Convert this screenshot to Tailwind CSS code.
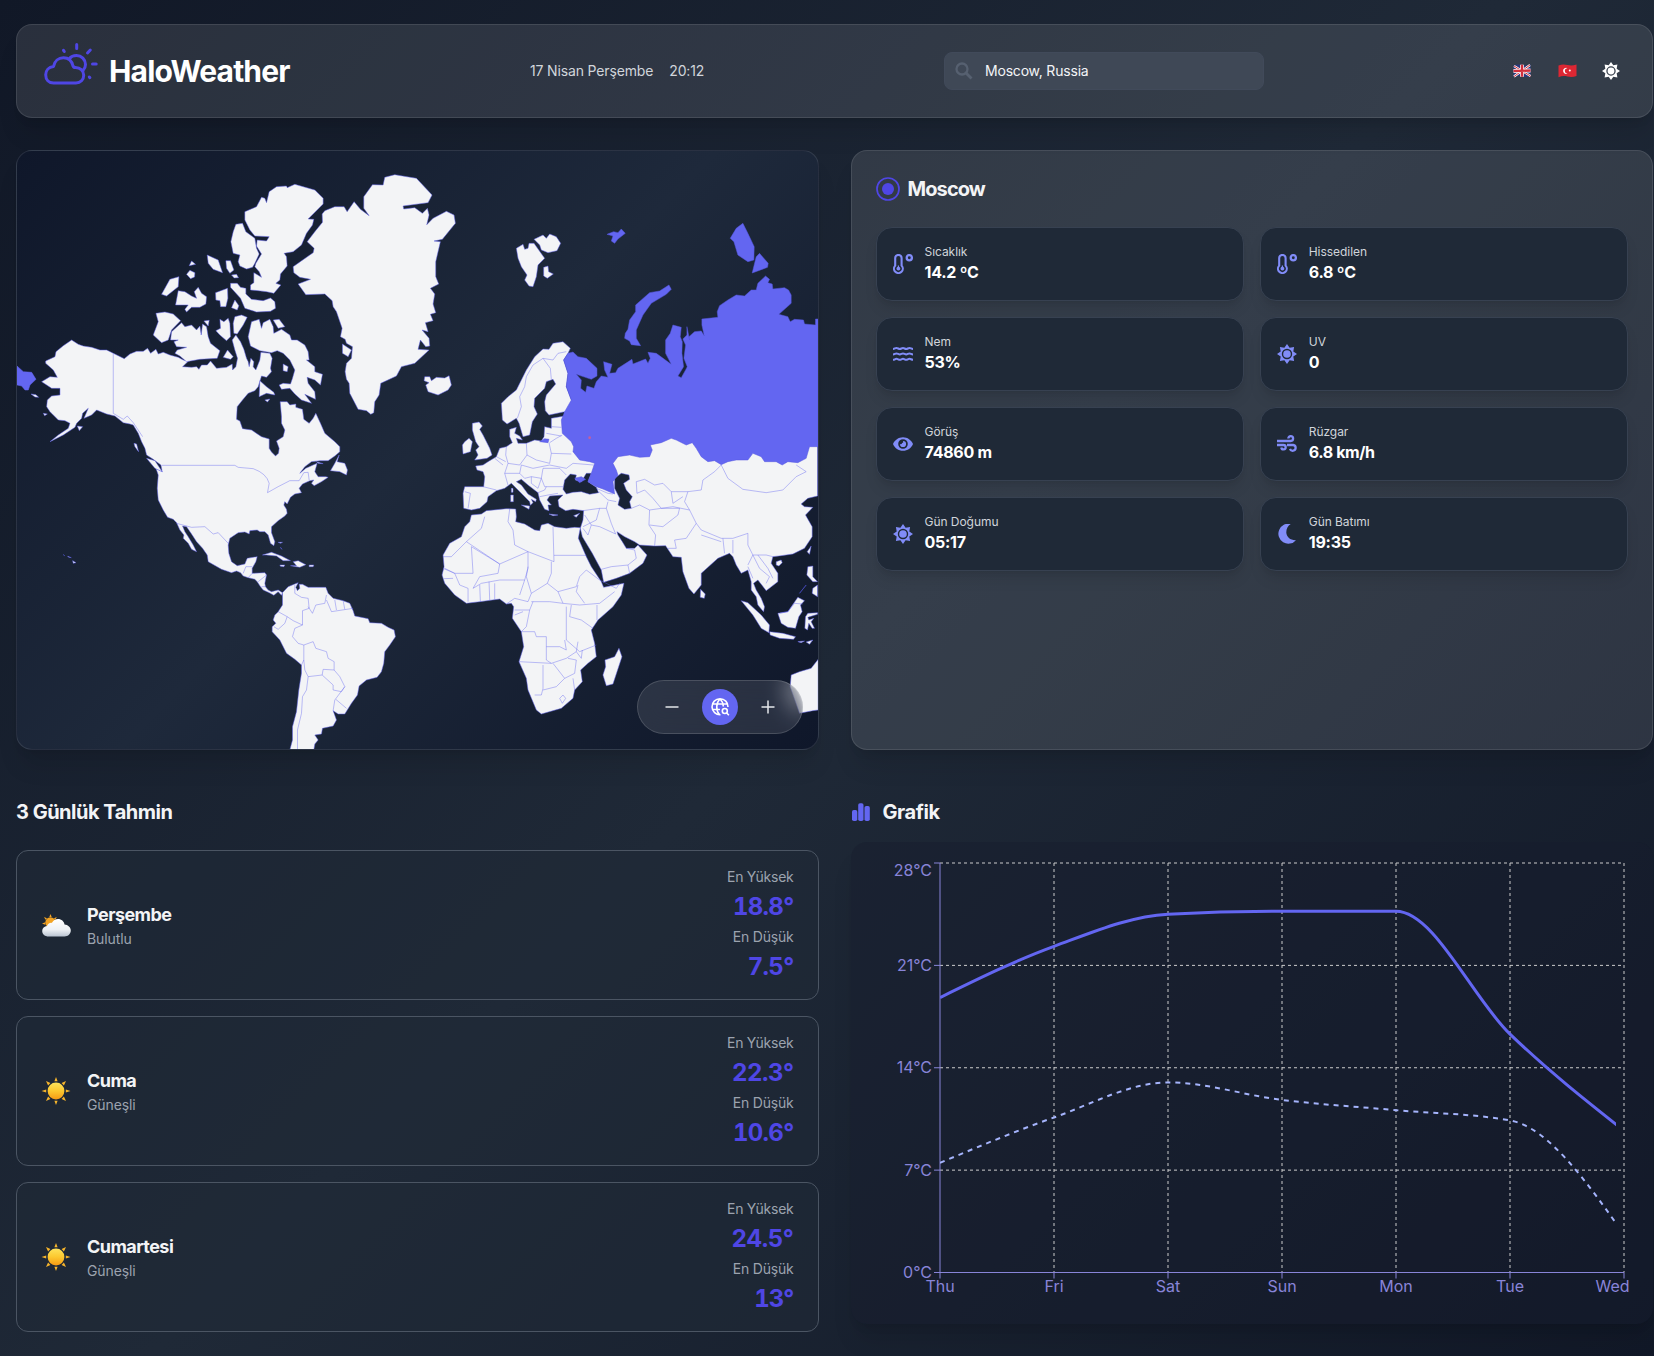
<!DOCTYPE html>
<html lang="tr">
<head>
<meta charset="utf-8">
<title>HaloWeather</title>
<script src="https://cdn.jsdelivr.net/npm/@tailwindcss/browser@4"></script>
</head>
<body class="w-[1654px] h-[1356px] overflow-hidden bg-[linear-gradient(135deg,#111827_0%,#1f2937_50%,#111827_100%)] font-['Inter',sans-serif] text-white">
<svg class="absolute w-0 h-0">
  <symbol id="sun" viewBox="-10 -10 20 20"><path fill-rule="evenodd" fill="currentColor" d="M10 0 6.3 2.6 7.1 7.1 2.6 6.3 0 10-2.6 6.3-7.1 7.1-6.3 2.6-10 0-6.3-2.6-7.1-7.1-2.6-6.3 0-10 2.6-6.3 7.1-7.1 6.3-2.6ZM5.2 0A5.2 5.2 0 1 0-5.2 0 5.2 5.2 0 1 0 5.2 0Z"/><circle r="3.8" fill="currentColor"/></symbol>
  <symbol id="thermo" viewBox="0 0 20 20"><path d="M2.200 11.600V4.100a3.200 3.200 0 0 1 6.400 0V11.600a4.400 4.400 0 1 1-6.400 0Z" fill="none" stroke="currentColor" stroke-width="2.100"/><path d="M4.800 11.500h1.200v1.300a1.900 1.900 0 1 1-1.200 0Z" fill="currentColor"/><circle cx="16.300" cy="3.700" r="2.600" fill="none" stroke="currentColor" stroke-width="2.300"/></symbol>
  <symbol id="waves" viewBox="0 0 20 20"><g fill="none" stroke="currentColor" stroke-width="2"><path d="M0 5c1.800 0 2-1 3.400-1S5.500 5 6.800 5s1.900-1 3.200-1 1.900 1 3.200 1 1.900-1 3.300-1S18.200 5 20 5"/><path d="M0 10.400c1.800 0 2-1 3.400-1s2.100 1 3.400 1 1.900-1 3.200-1 1.900 1 3.200 1 1.900-1 3.300-1 1.700 1 3.500 1"/><path d="M0 15.800c1.800 0 2-1 3.400-1s2.100 1 3.400 1 1.900-1 3.200-1 1.900 1 3.200 1 1.900-1 3.300-1 1.700 1 3.500 1"/></g></symbol>
  <symbol id="eye" viewBox="0 0 20 20"><path fill-rule="evenodd" fill="currentColor" d="M10 3.200C5.500 3.200 1.700 6 0 10c1.700 4 5.500 6.800 10 6.800S18.300 14 20 10C18.300 6 14.500 3.200 10 3.200Zm0 11.600a4.800 4.800 0 1 1 0-9.600 4.800 4.800 0 0 1 0 9.600Z"/><path fill="currentColor" d="M10 6.900a3.100 3.100 0 1 1-3.100 3.100 1.500 1.500 0 0 0 2.200-.9A1.500 1.500 0 0 0 10 6.900Z"/></symbol>
  <symbol id="wind" viewBox="0 0 20 20"><g fill="none" stroke="currentColor" stroke-width="2.300"><path d="M0 7h13.700a2.400 2.400 0 1 0-2.400-2.400"/><path d="M0 11h6.500a2.200 2.200 0 1 1-2.200 2.500"/><path d="M10 11h6.200a2.900 2.900 0 1 1-3.200 3.800"/></g></symbol>
  <symbol id="moon" viewBox="0 0 20 20"><path fill="currentColor" d="M13.700 0A10 10 0 1 0 19 16.200C13.500 16.500 9.500 13 9.300 8.500 9.200 5 10.800 2 13.700 0Z"/></symbol>
  <symbol id="emoji-sun" viewBox="0 0 30 30"><g fill="#f7b52c"><path d="M15 1l1.600 4.200h-3.200zM15 29l1.600-4.200h-3.200zM.5 15l4.700-1.600v3.200zM29.500 15l-4.700-1.600v3.200zM5 5l4.400 2.100-2.300 2.300zM25 5l-4.400 2.100 2.300 2.300zM5 25l4.400-2.100-2.300-2.300zM25 25l-4.400-2.100 2.300-2.300z"/></g><circle cx="15" cy="15" r="8.400" fill="url(#sung)"/></symbol>
  <defs>
    <linearGradient id="sung" x1="0" y1="0" x2="0" y2="1"><stop offset="0" stop-color="#fde25a"/><stop offset=".5" stop-color="#fcc82f"/><stop offset="1" stop-color="#f59a14"/></linearGradient>
    <linearGradient id="cloudg" x1="0" y1="0" x2="0" y2="1"><stop offset="0" stop-color="#fff"/><stop offset=".6" stop-color="#eef1f5"/><stop offset="1" stop-color="#b9c3d1"/></linearGradient>
  </defs>
</svg>

<div class="w-[1653px] pl-4 pt-6">
  <header class="h-[94px] flex items-center rounded-2xl border border-white/10 bg-white/10 shadow-xl px-6 relative">
    <svg class="w-[58px] h-[48px] shrink-0 -mt-3.5" viewBox="41 40 58 48" fill="none" stroke="#4f46e5" stroke-width="3" stroke-linecap="round" stroke-linejoin="round"><path d="M53.500 83c-4.800 0-7.800-3.500-7.800-8.200 0-4.500 3-7.800 7.800-8.300C54.500 61 58.500 57.800 63.500 57.800S71.800 61 73 66c.3 1 1 1.500 2.500 1.500 4.700 0 8.200 3.200 8.200 7.700S80.500 83 76 83Z"/><path d="M69.500 58.500C71 56.500 73.500 55.500 76.500 55.500c5 0 9 4 9 9 0 2.500-1 4.500-2.500 6M76.700 44.500v4M63.500 50.300l.8 1.200M90.300 50l-2.800 3M92.500 64h3.700M89.300 77l.6.700"/></svg>
    <h1 class="ml-2.5 w-[182px] text-3xl font-bold tracking-[-0.85px]">HaloWeather</h1>
    <div class="ml-[239px] w-[414px] flex gap-4 text-sm text-[#d1d5db] tracking-[-0.15px]"><span>17 Nisan Perşembe</span><span>20:12</span></div>
    <div class="w-80 h-[38px] rounded-lg bg-[#3f4856] border border-[#414a5a] flex items-center pl-2.5 text-sm text-[#f3f4f6] shrink-0 tracking-[-0.2px]">
      <svg class="w-[18px] h-[18px] mr-3" viewBox="0 0 18 18" fill="none" stroke="#566070" stroke-width="2.300"><circle cx="7" cy="7" r="5.500"/><path d="M11 11l5.500 5.500" stroke-width="2.800"/></svg>
      <span>Moscow, Russia</span>
    </div>
    <div class="absolute right-[32px] flex items-center">
      <svg class="w-[18px] h-[14px]" viewBox="0 0 18 14"><path fill="#29387e" d="M.5 1.500C4 0 7 .3 9.500 1c3 .8 5.500.5 8-.5V12c-3 1.300-5.500 1.300-8 .6-3-.8-6-.6-9 .6Z"/><path stroke="#fff" stroke-width="2.200" d="M1 2l16.500 10M17 1L1 12.500"/><path stroke="#d22f3c" stroke-width="1" d="M1 2l16.500 10M17 1L1 12.500"/><path stroke="#fff" stroke-width="3.800" d="M9 .8v12M.5 7l17-.5"/><path stroke="#d22f3c" stroke-width="2.400" d="M9 .8v12M.5 7l17-.5"/></svg>
      <svg class="w-[19px] h-[14px] ml-[27px]" viewBox="0 0 19 14"><path fill="#dd2733" d="M.5 1.500C4 0 7 .3 9.500 1c3 .8 6 .5 9-.5V12c-3 1.300-6 1.300-9 .6-3-.8-6-.6-9 .6Z"/><path fill="#fff" d="M9.500 4.200a3 3 0 1 0 0 5.300 2.300 2.300 0 1 1 0-5.300Z"/><circle cx="11.800" cy="6.500" r="1" fill="#fff"/></svg>
      <svg class="w-[18px] h-[18px] ml-[25px]"><use href="#sun"/></svg>
    </div>
  </header>

  <main class="mt-8 grid grid-cols-2 gap-x-8">
    <section class="relative h-[600px] rounded-2xl border border-white/10 shadow-xl overflow-hidden bg-[linear-gradient(135deg,#0f172a_0%,#1e293b_50%,#0f172a_100%)]">
      <svg class="w-full h-full block" viewBox="51 33 2403 1794" preserveAspectRatio="none" fill="#f3f4f6" stroke="#6366f1" stroke-width="1.500" stroke-linejoin="round">
        <!-- North America -->
        <path d="M137 663 165 650 168 635 190 617 215 600 235 613 250 618 275 622 300 630 320 630 340 640 373 656 390 642 410 634 430 634 443 625 452 640 468 628 475 642 490 637 510 645 535 652 550 660 565 664 548 680 575 682 590 680 597 688 605 675 622 675 632 663 650 685 680 682 697 672 698 690 708 680 713 655 705 630 697 600 708 585 722 605 732 628 740 655 745 665 748 680 753 655 762 665 760 680 768 690 780 660 783 637 810 640 817 655 812 685 815 695 800 712 785 708 775 740 765 752 745 760 728 780 712 800 710 838 720 843 728 866 755 870 785 890 808 897 808 925 815 936 827 948 836 940 838 925 830 903 850 890 855 870 845 850 845 830 841 785 862 785 870 795 888 792 888 802 908 808 912 838 928 850 940 835 948 820 962 850 975 880 1005 905 1020 920 1020 935 1005 948 985 962 960 962 935 965 915 980 900 1000 918 985 940 975 952 970 945 995 955 1010 978 1010 985 1012 965 1025 943 1037 935 1030 942 1020 930 1022 908 1032 898 1045 905 1058 885 1062 872 1072 862 1092 855 1085 852 1095 860 1108 862 1120 855 1128 835 1142 815 1160 815 1178 825 1205 822 1217 812 1210 805 1185 795 1175 780 1175 772 1170 750 1172 748 1182 735 1176 715 1178 690 1195 685 1215 687 1240 695 1265 712 1277 735 1272 742 1255 772 1250 768 1265 757 1285 757 1300 795 1298 800 1305 795 1330 797 1340 805 1350 815 1355 835 1350 848 1358 845 1366 835 1355 822 1366 808 1358 790 1350 782 1340 772 1325 765 1318 745 1313 730 1308 722 1298 710 1293 695 1298 665 1288 625 1265 622 1245 608 1225 590 1205 575 1182 560 1160 548 1158 555 1175 565 1190 580 1215 590 1235 575 1228 565 1210 550 1195 552 1185 540 1170 530 1148 520 1138 503 1132 490 1110 475 1080 472 1045 475 1005 468 985 487 995 483 975 460 958 440 945 435 925 425 905 415 880 400 855 390 852 370 848 345 828 320 822 290 810 275 825 252 835 265 805 248 820 245 835 230 850 225 862 190 885 150 905 175 885 205 865 210 850 195 842 175 840 160 825 150 815 140 800 142 780 155 768 180 765 180 745 155 745 125 725 150 710 172 712 160 690 137 670Z"/>
        <!-- Greenland -->
        <path d="M1155 112 1150 135 1118 134 1092 170 1092 205 1108 227 1082 208 1063 185 1042 215 1033 200 1005 200 975 212 967 222 968 247 945 275 922 305 943 325 940 338 880 380 882 398 900 412 932 418 895 432 918 464 975 462 997 482 1000 500 1010 515 1027 565 1022 590 1036 598 1040 610 1058 620 1055 655 1040 670 1036 695 1040 718 1048 730 1050 760 1075 808 1100 812 1113 823 1122 818 1125 785 1138 765 1143 730 1190 708 1205 680 1245 670 1288 630 1255 628 1262 600 1278 620 1290 618 1288 595 1267 570 1285 575 1277 548 1300 542 1292 523 1308 518 1300 492 1305 462 1292 445 1317 432 1308 410 1308 365 1322 305 1303 303 1328 298 1367 250 1363 225 1340 214 1300 235 1281 254 1288 225 1283 205 1268 220 1245 203 1212 207 1210 198 1285 188 1297 165 1250 115 1185 104Z"/>
        <!-- Arctic archipelago -->
        <path d="M808 155 830 140 860 138 862 143 885 133 945 150 970 175 970 192 925 237 942 238 938 255 920 280 905 315 880 335 853 340 860 350 862 378 842 402 840 420 828 430 843 435 822 460 800 455 775 452 752 450 752 435 762 428 762 398 785 412 778 395 765 380 768 370 785 342 770 318 772 300 800 303 808 290 765 288 750 270 735 240 735 215 770 200 785 172 795 175 800 188ZM708 253 728 250 738 275 765 295 770 325 778 342 765 370 758 382 740 387 720 378 715 365 720 345 700 340 693 305 700 275ZM622 345 655 360 668 398 640 388 625 370ZM678 362 692 362 702 390 690 400 680 385ZM695 405 710 403 716 413 703 414ZM568 377 575 363 587 373ZM560 403 570 391 585 398 584 411 572 416ZM537 410 535 440 500 468 485 463 510 418ZM535 452 555 455 575 468 590 475 583 455 595 442 605 460 620 470 618 492 600 502 575 502 560 516 555 508 565 495 527 495ZM647 458 683 445 684 475 678 500 662 500 660 482 648 480ZM705 480 717 497 712 510 695 503ZM692 430 712 430 722 442 738 445 738 462 755 478 790 482 812 474 825 485 827 505 812 514 770 516 735 505 722 475 692 442ZM468 520 495 516 520 522 542 542 515 570 505 600 485 608 460 585 475 545ZM515 575 545 548 555 560 575 555 590 570 600 558 604 585 608 552 620 560 625 590 632 610 660 632 652 655 600 658 560 665 540 648 525 640 532 630 560 622 530 620 522 605 535 600 512 600ZM612 543 628 541 625 558ZM660 538 672 545 685 535 690 550 692 590 680 602 660 585 648 572 662 565ZM705 530 725 525 742 532 730 555 712 582 702 580 700 550ZM683 630 700 650 692 658 670 652ZM755 545 778 538 785 565 790 548 810 538 820 560 822 580 845 568 870 585 875 600 892 600 915 615 925 635 928 660 920 660 945 680 945 695 968 703 962 735 945 720 922 712 925 730 945 755 947 778 915 763 935 790 905 780 885 762 870 745 845 748 838 735 850 730 872 732 878 715 885 690 870 660 850 640 832 632 815 638 780 632 752 618 745 590ZM820 540 838 538 855 560 835 565ZM850 672 865 680 862 695 850 692ZM780 722 800 740 822 757 825 765 800 760 778 770ZM795 780 810 777 803 786ZM1028 612 1055 630 1045 650 1028 640Z"/>
        <!-- Atlantic, Caribbean and Pacific islands -->
        <path d="M93 762 108 764 116 772 105 771ZM232 858 248 860 238 872ZM130 820 142 822 134 827ZM402 910 410 912 416 935 405 920ZM440 955 465 962 487 995 465 985ZM1018 945 1012 965 1035 970 1043 990 1040 1005 1020 995 992 992 1005 970ZM950 965 970 971 955 970ZM788 1245 815 1237 845 1248 872 1262 850 1262 830 1248 800 1245ZM872 1277 890 1277 880 1265 895 1262 918 1274 900 1282ZM928 1275 942 1275 940 1280 928 1280ZM840 1275 855 1275 852 1280 842 1279ZM218 1262 228 1268 220 1270ZM203 1249 214 1253 205 1251ZM190 1244 194 1247ZM835 1207 848 1207 842 1210ZM842 1222 846 1228Z"/>
        <!-- South America -->
        <path d="M848 1358 865 1340 885 1332 895 1328 888 1342 893 1352 900 1345 898 1333 908 1333 925 1342 950 1342 978 1342 985 1360 1000 1375 1030 1382 1050 1390 1060 1412 1065 1428 1105 1436 1110 1448 1145 1450 1165 1462 1183 1470 1187 1490 1170 1515 1155 1535 1152 1570 1145 1595 1132 1612 1100 1620 1078 1638 1073 1665 1055 1690 1035 1722 1015 1722 1000 1712 1010 1740 1000 1758 968 1765 965 1782 945 1785 955 1800 945 1812 942 1830 870 1830 878 1800 878 1760 890 1715 897 1650 905 1600 905 1575 885 1558 860 1540 840 1500 817 1475 817 1460 828 1450 820 1440 825 1425 835 1415 848 1395Z"/>
        <path fill="none" stroke-opacity=".85" d="M340 640V820L370 838 382 828 400 848 428 890M485 976H705L715 982 760 986Q800 1000 808 1030L803 1058 835 1040 870 1022 898 1022 912 998 925 997 928 1020M530 1150 575 1162 615 1160 640 1182 655 1178 687 1212M730 1300 738 1280 757 1280M745 1313 757 1300M775 1325 800 1305M785 1340 797 1340M885 1335 885 1360 905 1372 925 1375 928 1405 908 1412 908 1455 880 1442 862 1430 835 1415M925 1400 938 1420 948 1395 975 1390 980 1365M980 1380 995 1415 1060 1405M1005 1380 1010 1410M1030 1382 1035 1408M862 1430 855 1450 835 1468 822 1460M908 1455 885 1465 878 1490 895 1510 912 1515 912 1560 905 1575M912 1515 940 1505 948 1525 980 1535 985 1555 1003 1565 1003 1590 970 1588 967 1605 925 1610 915 1590 912 1560M967 1605 1000 1635 1000 1650 1025 1655 1035 1640 1020 1610 1003 1590M925 1610 920 1650 908 1670 905 1720 893 1770 893 1830M1035 1640 1005 1680 1000 1712M1008 1678 1040 1705"/>
        <path fill="#6366f1" d="M51 678 70 695 95 697 108 718 90 735 85 750 75 750 65 738 51 735Z"/>

        <g transform="translate(1200 0)">
          <!-- North Atlantic islands, Great Britain and Ireland -->
          <path d="M75 710 90 710 95 722 110 712 135 714 148 707 155 735 145 750 115 765 85 755 78 735 88 728 73 722ZM350 325 370 313 375 328 385 325 388 310 403 310 435 355 415 375 410 410 400 440 388 438 375 420 382 405 365 380 355 355ZM403 298 430 285 440 295 450 282 470 290 483 310 472 332 445 338 425 330 420 315ZM432 382 445 378 447 395 461 402 443 415 432 408ZM218 850 238 846 248 858 240 868 250 885 270 925 277 945 262 955 225 960 235 945 228 930 238 920 228 905 218 870ZM195 905 208 895 218 905 212 935 190 942 188 915Z"/>
          <!-- Eurasia -->
          <path fill-rule="evenodd" d="M505 640 512 625 490 605 460 610 448 628 430 627 405 650 380 690 350 750 325 770 305 790 308 840 322 852 350 835 358 850 370 890 390 885 398 845 413 822 403 800 405 775 435 745 440 725 460 718 468 732 440 765 435 785 437 812 448 825 495 815 495 828 455 835 455 865 435 860 433 890 425 903 405 900 380 910 355 910 350 895 368 900 360 888 345 880 350 862 330 868 330 890 338 908 320 920 300 925 290 950 265 965 250 975 228 978 232 990 250 995 255 1010 252 1040 195 1040 190 1060 192 1105 215 1110 240 1105 262 1085 265 1070 290 1052 315 1045 335 1030 350 1045 370 1065 390 1085 392 1096 400 1088 395 1078 408 1085 410 1078 385 1062 365 1035 350 1025 365 1018 385 1035 415 1058 420 1080 435 1108 448 1112 445 1095 455 1095 442 1080 450 1068 490 1065 475 1080 478 1100 498 1112 520 1108 552 1112 550 1140 542 1165 548 1190 578 1240 605 1290 612 1327 650 1315 690 1300 730 1270 742 1245 715 1215 705 1225 680 1225 668 1205 655 1185 652 1175 675 1190 705 1205 720 1215 765 1218 798 1217 820 1250 845 1252 850 1295 868 1345 883 1362 905 1335 905 1300 955 1255 990 1240 1000 1250 1010 1275 1025 1300 1045 1290 1055 1325 1055 1350 1070 1370 1075 1395 1092 1415 1095 1400 1085 1375 1070 1350 1062 1330 1075 1320 1100 1352 1135 1325 1135 1300 1115 1270 1120 1250 1145 1247 1180 1242 1215 1225 1238 1190 1238 1160 1218 1125 1240 1102 1215 1100 1205 1092 1225 1075 1254 1068 1254 780 560 790 515 780 500 740 505 700 492 660ZM490 1048 495 1020 512 1002 530 1005 527 1020 545 1025 560 1000 575 1000 565 1025 590 1042 597 1058 570 1063 545 1055 520 1057 500 1062ZM645 1015 665 1000 688 1005 690 1018 672 1030 680 1050 698 1070 690 1085 695 1105 675 1108 655 1095 660 1075 645 1045Z"/>
          <!-- Africa -->
          <path d="M215 1125 245 1122 260 1112 320 1106 348 1107 350 1130 348 1145 375 1152 405 1170 420 1172 425 1155 445 1150 465 1160 500 1165 525 1162 542 1163 536 1195 560 1250 575 1280 605 1325 612 1342 673 1330 665 1365 640 1400 595 1440 575 1470 585 1510 590 1550 565 1570 543 1590 548 1625 525 1650 520 1675 485 1705 425 1722 410 1710 385 1650 380 1615 358 1565 372 1520 365 1475 338 1435 342 1400 335 1390 320 1392 300 1377 240 1385 200 1390 165 1365 135 1330 127 1305 133 1280 130 1245 150 1210 185 1190 195 1160 210 1145Z"/>
          <!-- Mediterranean, Indian Ocean and Asian islands, Australia -->
          <path d="M365 1095 390 1098 388 1108ZM333 1065 341 1065 341 1085 333 1085ZM335 1045 340 1045 340 1057 335 1057ZM448 1122 475 1125 460 1127ZM522 1127 540 1120 530 1132ZM658 1525 667 1550 640 1632 620 1637 610 1605 618 1580 616 1560 645 1550ZM903 1348 917 1362 914 1375 902 1372ZM1025 1382 1045 1388 1085 1425 1110 1455 1108 1478 1085 1465 1060 1425ZM1110 1475 1150 1480 1188 1490 1182 1498 1140 1495 1112 1485ZM1135 1420 1165 1415 1195 1372 1215 1382 1203 1395 1208 1415 1198 1430 1188 1465 1165 1462 1145 1450ZM1218 1430 1225 1420 1254 1418 1254 1423 1225 1432 1228 1440 1243 1435 1235 1445 1245 1465 1238 1465 1228 1450 1224 1470 1216 1465ZM1225 1280 1240 1278 1240 1310 1254 1325 1240 1325 1222 1305ZM1240 1345 1254 1335 1254 1370 1238 1360ZM1130 1265 1145 1260 1148 1268 1138 1278 1130 1275ZM1235 1218 1230 1243 1223 1235ZM1195 1505 1215 1503 1205 1508ZM1220 1506 1240 1500 1230 1513ZM1256 1558 1235 1585 1200 1595 1175 1605 1172 1640 1200 1720 1240 1712 1256 1710Z"/>
          <!-- Borders -->
          <path fill="none" stroke-opacity=".85" d="M353 835 365 800 360 770 375 740 380 710 400 675 430 655 460 660 475 640 500 635M430 655 452 685 455 718M455 860 485 862M440 880 485 888M450 908 470 895 488 885M448 908 455 940 515 942M380 910 382 945 410 960 450 970 455 940M320 920 318 945 325 970 360 975 382 945M290 950 318 965M325 970 315 1000 325 1035M315 1000 360 1000 365 975 400 985 450 975M360 1000 375 1015 395 1010 425 1015 430 985 480 985 500 1005M425 1015 435 1040 490 1040M395 1010 395 1030 415 1045 425 1015M415 1058 435 1050 440 1040M420 1070 445 1065 475 1060M450 975 500 985 520 970 582 975M250 1040 290 1050M195 1055 212 1060 205 1105M285 955 310 975M550 1112 600 1105 620 1105M590 1045 625 1060 640 1062M598 1055 625 1080 650 1085M620 1105 625 1085M600 1105 590 1140 550 1160M620 1105 635 1150 648 1182 600 1160 575 1155M550 1165 565 1185 575 1155M555 1125 575 1155M605 1288 635 1280 685 1275M680 1225 705 1230 710 1255 685 1275 690 1300M712 1060 710 1025 735 1018 765 1035 790 1030 815 1055 865 1055 905 1050 910 1020 945 995 965 975M712 1060 735 1050 760 1075 785 1105 750 1110 720 1095 695 1105M750 1110 748 1155 768 1185 765 1218M750 1155 790 1160 835 1125 840 1105 785 1105 820 1100 870 1110 890 1150 860 1195 825 1200 830 1225 805 1225M815 1055 820 1090 850 1070M870 1110 855 1085 865 1055M890 1150 905 1170 965 1195 1000 1195 1045 1180 1045 1215 1060 1245 1100 1245 1120 1250M905 1185 965 1205M970 1195 975 1240M1000 1200 1000 1240M965 975 985 1015 1030 1048 1100 1058 1150 1050 1190 1010 1220 995 1190 975M1045 1275 1060 1245 1080 1285 1110 1310 1100 1330M1075 1245 1105 1285 1120 1315M1045 1280 1060 1315M1140 1420 1165 1415 1185 1390 1210 1392M460 1160 463 1265M463 1246 560 1246M463 1265 385 1235 345 1215 340 1170 325 1145 330 1107M385 1235 300 1272 200 1205 245 1165 255 1130M215 1220 300 1272 295 1300 240 1310 220 1345M215 1220 220 1300 165 1300 135 1285M200 1205 155 1250 130 1250M133 1316 160 1315M130 1285 165 1300 180 1335 205 1345 205 1385M240 1335 242 1385M268 1325 270 1380M285 1330 285 1378M220 1345 245 1330 300 1320 375 1320 385 1285 385 1235M455 1265 455 1300 443 1330 395 1360 385 1385 345 1375 320 1392M375 1320 360 1365M385 1280 380 1310 395 1360M443 1330 475 1355 530 1340 540 1310 560 1290 600 1320 650 1345 660 1330M475 1355 490 1390 540 1395 600 1390 645 1355M535 1335 530 1355 555 1390M592 1395 592 1440M395 1385 450 1385 490 1390M345 1410 390 1410 380 1460 365 1475M390 1410 400 1385M345 1425 370 1415M500 1400 500 1500 540 1535 590 1515M515 1395 510 1430 545 1440 580 1465M365 1475 405 1475 410 1490 440 1490 440 1560 455 1570 358 1565M440 1520 480 1520 500 1530 495 1500M455 1570 500 1555 530 1535 535 1505M430 1575 430 1645 425 1665 405 1665M430 1650 470 1640 495 1615 460 1570M495 1615 525 1600 530 1560 505 1555M520 1615 525 1650M530 1535 545 1555 548 1530M480 1675 490 1665 498 1675 488 1690Z"/>
          <!-- Russia -->
          <g fill="#6366f1" stroke="#5558e0">
            <path d="M505 640 520 636 535 650 560 655 592 685 592 708 575 718 530 703 545 720 543 745 558 757 562 738 583 745 590 725 605 708 625 712 615 690 612 665 637 673 630 700 648 698 655 685 697 658 700 672 738 657 745 670 752 655 745 637 770 640 815 673 798 640 798 600 812 580 820 555 845 562 842 590 848 605 847 640 852 680 835 708 845 713 858 690 863 680 853 655 858 615 850 597 862 585 862 560 870 600 868 590 885 575 905 573 914 587 907 555 907 537 955 532 953 515 960 497 985 480 1010 465 1035 468 1055 450 1070 450 1075 430 1098 408 1110 418 1105 428 1118 432 1120 447 1155 443 1167 450 1175 465 1175 490 1138 523 1165 530 1172 545 1185 538 1212 540 1215 552 1248 555 1248 537 1256 537 1256 920 1230 920 1220 955 1195 968 1165 965 1148 975 1130 965 1095 965 1085 950 1060 940 1045 960 1010 960 985 965 965 974 945 962 925 965 905 950 890 925 878 908 860 915 830 900 815 895 785 908 752 915 758 930 750 950 720 952 690 945 655 950 640 970 650 990 655 1005 640 1025 645 1062 610 1047 590 1040 565 1025 575 1000 585 970 570 965 540 960 520 935 522 920 515 905 488 880 485 840 495 815 515 780 500 740 505 700 492 660Z"/>
            <path d="M622 283 642 275 655 278 665 267 677 280 655 297 645 310 635 303 640 288ZM1010 265 1030 250 1045 280 1064 320 1063 360 1045 365 1015 345 1003 305 992 295ZM1080 340 1106 370 1104 382 1058 399 1070 350ZM808 435 815 448 800 463 755 490 730 525 710 570 710 595 723 617 695 614 690 603 675 595 677 580 685 568 690 540 708 515 708 495 750 458 780 453ZM420 905 435 896 448 898 445 908ZM525 1015 545 1010 558 1018 540 1028ZM1200 1360 1220 1335Z"/>
          </g>
          <circle cx="570" cy="893" r="4" fill="#c65f9a" stroke="none"/>
        </g>
      </svg>
      <div class="absolute right-[15px] bottom-[15px] flex items-center gap-3 px-4 py-2 rounded-full border border-white/15 bg-white/10 backdrop-blur-md text-[#e5e7eb]">
        <span class="size-9 flex items-center justify-center"><svg class="size-4" viewBox="0 0 16 16" stroke="currentColor" stroke-width="1.500"><path d="M1.500 8h13"/></svg></span>
        <span class="size-9 flex items-center justify-center rounded-full bg-[#6366f1] text-white"><svg class="size-5" viewBox="0 0 20 20" fill="none" stroke="currentColor" stroke-width="1.600"><path d="M10.500 17.700A8 8 0 1 1 18 10M2.800 7h14.400M2.800 12.500H10M10 2C6 5.500 5.500 13 9.500 17.800M10 2c2 1.800 3.200 4.500 3.300 7.500"/><circle cx="14.800" cy="14" r="2.500"/><path d="M16.700 16l2.200 2.200"/></svg></span>
        <span class="size-9 flex items-center justify-center"><svg class="size-4" viewBox="0 0 16 16" stroke="currentColor" stroke-width="1.500"><path d="M1.500 8h13M8 1.500v13"/></svg></span>
      </div>
    </section>

    <section class="h-[600px] rounded-2xl border border-white/10 bg-white/10 shadow-xl p-6">
      <h2 class="flex items-center gap-2 text-xl font-bold text-[#f3f4f6] mb-6 h-7">
        <svg class="size-6" viewBox="0 0 24 24"><circle cx="12" cy="12" r="11" fill="none" stroke="#4f46e5" stroke-width="1.700"/><circle cx="12" cy="12" r="6" fill="#4f46e5"/></svg>
        <span class="tracking-[-0.9px]">Moscow</span>
      </h2>
      <div class="grid grid-cols-2 gap-4 tracking-[-0.05px]">
        <div class="flex items-center gap-3 p-4 rounded-2xl border border-[#374151] bg-[#1f2937] shadow-lg"><svg class="size-5 text-[#818cf8]"><use href="#thermo"/></svg><div><p class="text-xs text-[#d1d5db]">Sıcaklık</p><p class="font-bold tracking-[-0.25px]">14.2 ºC</p></div></div>
        <div class="flex items-center gap-3 p-4 rounded-2xl border border-[#374151] bg-[#1f2937] shadow-lg"><svg class="size-5 text-[#818cf8]"><use href="#thermo"/></svg><div><p class="text-xs text-[#d1d5db]">Hissedilen</p><p class="font-bold tracking-[-0.25px]">6.8 ºC</p></div></div>
        <div class="flex items-center gap-3 p-4 rounded-2xl border border-[#374151] bg-[#1f2937] shadow-lg"><svg class="size-5 text-[#818cf8]"><use href="#waves"/></svg><div><p class="text-xs text-[#d1d5db]">Nem</p><p class="font-bold tracking-[-0.25px]">53%</p></div></div>
        <div class="flex items-center gap-3 p-4 rounded-2xl border border-[#374151] bg-[#1f2937] shadow-lg"><svg class="size-5 text-[#818cf8]"><use href="#sun"/></svg><div><p class="text-xs text-[#d1d5db]">UV</p><p class="font-bold tracking-[-0.25px]">0</p></div></div>
        <div class="flex items-center gap-3 p-4 rounded-2xl border border-[#374151] bg-[#1f2937] shadow-lg"><svg class="size-5 text-[#818cf8]"><use href="#eye"/></svg><div><p class="text-xs text-[#d1d5db]">Görüş</p><p class="font-bold tracking-[-0.25px]">74860 m</p></div></div>
        <div class="flex items-center gap-3 p-4 rounded-2xl border border-[#374151] bg-[#1f2937] shadow-lg"><svg class="size-5 text-[#818cf8]"><use href="#wind"/></svg><div><p class="text-xs text-[#d1d5db]">Rüzgar</p><p class="font-bold tracking-[-0.4px]">6.8 km/h</p></div></div>
        <div class="flex items-center gap-3 p-4 rounded-2xl border border-[#374151] bg-[#1f2937] shadow-lg"><svg class="size-5 text-[#818cf8]"><use href="#sun"/></svg><div><p class="text-xs text-[#d1d5db]">Gün Doğumu</p><p class="font-bold tracking-[-0.25px]">05:17</p></div></div>
        <div class="flex items-center gap-3 p-4 rounded-2xl border border-[#374151] bg-[#1f2937] shadow-lg"><svg class="size-5 text-[#818cf8]"><use href="#moon"/></svg><div><p class="text-xs text-[#d1d5db]">Gün Batımı</p><p class="font-bold tracking-[-0.25px]">19:35</p></div></div>
      </div>
    </section>

    <section class="mt-12">
      <h2 class="text-xl font-bold text-[#f3f4f6] mb-6 h-7 tracking-[-0.5px]">3 Günlük Tahmin</h2>
      <div class="space-y-4">
        <div class="h-[150px] flex items-center px-6 rounded-xl border border-[#4b5563] bg-[#1f2937]/60">
          <svg class="w-[30px] h-[30px] mr-4 mt-1" viewBox="0 0 30 30"><g fill="#f2a324"><circle cx="9.500" cy="10.500" r="5.200"/><path d="M9.500 2l1.200 3h-2.400zM3 5l3 1.200-1.500 1.500zM15.800 5l-2.900 1.200 1.500 1.500zM1 11.500l3.300-1.200v2.400z"/></g><path fill="url(#cloudg)" d="M7.500 24.500C4 24.500 1.200 22.300 1.200 19c0-2.800 2.300-4.500 4.800-4.900.6-2.200 2.600-3.500 4.800-3.200C12.300 8.300 14.500 7 17 7c3.500 0 6 2.400 6.500 5.500 3.500.3 6.300 2.800 6.300 6s-2.600 6-6.300 6Z"/></svg>
          <div class="flex-1"><p class="text-lg leading-7 font-bold tracking-[-0.55px] text-[#f3f4f6]">Perşembe</p><p class="text-sm text-[#9ca3af] tracking-[-0.1px]">Bulutlu</p></div>
          <div class="text-right space-y-1"><p class="text-sm text-[#9ca3af] tracking-[-0.25px]">En Yüksek</p><p class="text-2xl font-bold text-[#4f46e5] tabular-nums tracking-[-0.7px]">18.8°</p><p class="text-sm text-[#9ca3af] tracking-[-0.2px]">En Düşük</p><p class="text-2xl font-bold text-[#4f46e5] tabular-nums tracking-[-0.7px]">7.5°</p></div>
        </div>
        <div class="h-[150px] flex items-center px-6 rounded-xl border border-[#4b5563] bg-[#1f2937]/60">
          <svg class="w-[30px] h-[30px] mr-4"><use href="#emoji-sun"/></svg>
          <div class="flex-1"><p class="text-lg leading-7 font-bold tracking-[-0.55px] text-[#f3f4f6]">Cuma</p><p class="text-sm text-[#9ca3af] tracking-[-0.1px]">Güneşli</p></div>
          <div class="text-right space-y-1"><p class="text-sm text-[#9ca3af] tracking-[-0.25px]">En Yüksek</p><p class="text-2xl font-bold text-[#4f46e5] tabular-nums tracking-[-0.5px]">22.3°</p><p class="text-sm text-[#9ca3af] tracking-[-0.2px]">En Düşük</p><p class="text-2xl font-bold text-[#4f46e5] tabular-nums tracking-[-0.7px]">10.6°</p></div>
        </div>
        <div class="h-[150px] flex items-center px-6 rounded-xl border border-[#4b5563] bg-[#1f2937]/60">
          <svg class="w-[30px] h-[30px] mr-4"><use href="#emoji-sun"/></svg>
          <div class="flex-1"><p class="text-lg leading-7 font-bold tracking-[-0.55px] text-[#f3f4f6]">Cumartesi</p><p class="text-sm text-[#9ca3af] tracking-[-0.1px]">Güneşli</p></div>
          <div class="text-right space-y-1"><p class="text-sm text-[#9ca3af] tracking-[-0.25px]">En Yüksek</p><p class="text-2xl font-bold text-[#4f46e5] tabular-nums tracking-[-0.4px]">24.5°</p><p class="text-sm text-[#9ca3af] tracking-[-0.2px]">En Düşük</p><p class="text-2xl font-bold text-[#4f46e5] tabular-nums tracking-[-0.9px]">13°</p></div>
        </div>
      </div>
    </section>

    <section class="mt-12">
      <h2 class="flex items-center gap-3 text-xl font-bold text-[#f3f4f6] mb-4 h-7">
        <svg class="size-5" viewBox="0 0 20 20" fill="#6366f1"><rect x="1" y="8" width="5.300" height="11" rx="1.800"/><rect x="7.200" y="1.200" width="5.300" height="17.800" rx="1.800"/><rect x="13.500" y="4" width="5.300" height="15" rx="1.800"/></svg>
        <span class="tracking-[-0.4px]">Grafik</span>
      </h2>
      <div class="h-[482px] rounded-2xl shadow-xl bg-[#161b2c]/40">
        <svg id="chart" class="block w-[802px] h-[482px] text-base" viewBox="851 842 802 482" fill="none"></svg>
      </div>
    </section>
  </main>
</div>

<script>
const X0 = 940, STEP = 114, TOP = 863, BASE = 1272.5, MAX = 28;
const days = ['Thu', 'Fri', 'Sat', 'Sun', 'Mon', 'Tue', 'Wed'];
const high = [18.8, 22.3, 24.5, 24.7, 24.7, 16.3, 9.7];
const low = [7.5, 10.6, 13, 11.8, 11.1, 10.4, 2.6];
const y = v => BASE - v * (BASE - TOP) / MAX;

// Monotone cubic interpolation through evenly spaced points
function curve(vals) {
  const p = vals.map((v, i) => [X0 + i * STEP, y(v)]);
  const s = p.slice(1).map((q, i) => (q[1] - p[i][1]) / STEP);
  const m = p.map((_, i) => {
    if (i === 0 || i === p.length - 1) return null;
    const a = s[i - 1], b = s[i];
    return (Math.sign(a) + Math.sign(b)) * Math.min(Math.abs(a), Math.abs(b), 0.5 * Math.abs((a + b) / 2)) || 0;
  });
  m[0] = (3 * s[0] - m[1]) / 2;
  m[6] = (3 * s[5] - m[5]) / 2;
  let d = `M${p[0]}`;
  for (let i = 1; i < p.length; i++) {
    const h = STEP / 3;
    d += `C${p[i - 1][0] + h},${p[i - 1][1] + h * m[i - 1]},${p[i][0] - h},${p[i][1] - h * m[i]},${p[i]}`;
  }
  return d;
}

let out = '<clipPath id="reveal"><rect x="940" y="850" width="676" height="440"/></clipPath><g stroke="#ccc" stroke-dasharray="3 3">';
for (const v of [7, 14, 21, 28]) out += `<path d="M940 ${y(v)}H1624"/>`;
for (let i = 1; i < 7; i++) out += `<path d="M${X0 + i * STEP} ${TOP}V${BASE}"/>`;
out += `</g><g stroke="#8884d8"><path d="M940 ${TOP}V${BASE}M940 ${BASE}H1624"/>`;
for (const v of [0, 7, 14, 21, 28]) out += `<path d="M934 ${y(v)}H940"/>`;
for (let i = 0; i < 7; i++) out += `<path d="M${X0 + i * STEP} ${BASE}v6"/>`;
out += '</g><g fill="#8884d8">';
for (const v of [0, 7, 14, 21, 28]) out += `<text text-anchor="end" x="932" y="${v === 28 ? 876 : y(v) + 5.5}">${v}°C</text>`;
days.forEach((d, i) => out += `<text text-anchor="middle" x="${i === 6 ? 1612.5 : X0 + i * STEP}" y="1292">${d}</text>`);
out += `</g><g clip-path="url(#reveal)"><path stroke="#6366f1" stroke-width="3" d="${curve(high)}"/><path stroke="#a5b4fc" stroke-width="2" stroke-dasharray="5 5" d="${curve(low)}"/></g>`;
document.getElementById('chart').innerHTML = out;
</script>
</body>
</html>
